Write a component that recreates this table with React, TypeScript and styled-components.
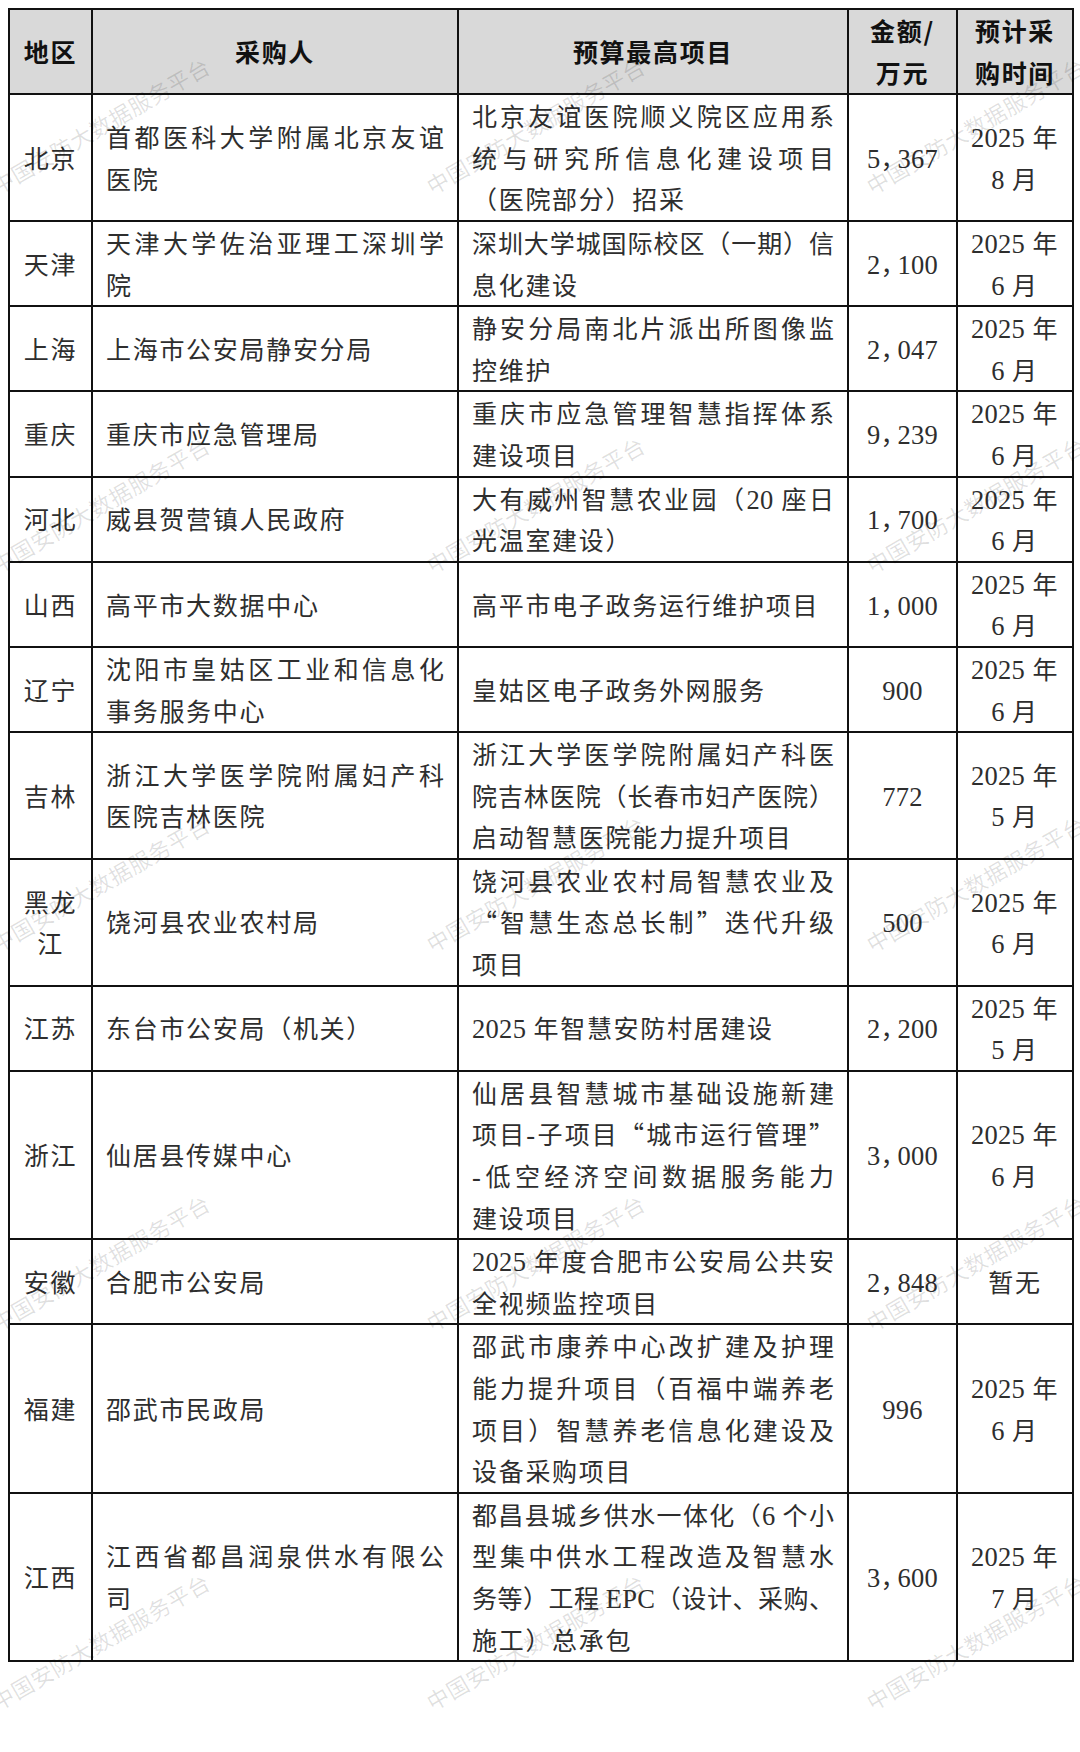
import React from "react";
import styled, { createGlobalStyle } from "styled-components";

const GlobalStyle = createGlobalStyle`
  html, body {
    margin: 0;
    padding: 0;
    background: #fff;
  }
  body {
    font-family: "Noto Sans CJK SC", sans-serif;
  }
`;

const Page = styled.div`
  position: relative;
  box-sizing: border-box;
  width: 1080px;
  height: 1752px;
  padding: 8px;
  overflow: hidden;
  background: #fff;
`;

const Table = styled.table`
  width: 1064px;
  table-layout: fixed;
  border-collapse: collapse;
  border: 2px solid #111;
  font-family: "Noto Sans CJK SC", "Noto Sans CJK JP", sans-serif;
  font-size: 25px;
  line-height: 41.6px;
  color: #2e2e2e;
`;

const Col = styled.col<{ $w: number }>`
  width: ${({ $w }) => $w}px;
`;

const HeadCell = styled.th`
  padding: 0 6px;
  border: 2px solid #111;
  background: #d9d9d9;
  color: #111;
  font-weight: 700;
  letter-spacing: 1px;
  text-align: center;
  vertical-align: middle;
`;

type Kind = "region" | "text" | "amount" | "date";

const Cell = styled.td<{ $kind: Kind }>`
  padding: 0 ${({ $kind }) => ($kind === "text" ? "13px" : "4px")};
  border: 2px solid #111;
  vertical-align: middle;
  text-align: ${({ $kind }) => ($kind === "text" ? "left" : "center")};
`;

// one printed line of a cell; full lines are stretched edge to edge like the source doc
const Line = styled.span<{ $fill: boolean }>`
  display: block;
  letter-spacing: ${({ $fill }) => ($fill ? "0" : "1.7px")};
  text-align: ${({ $fill }) => ($fill ? "justify" : "inherit")};
  text-align-last: ${({ $fill }) => ($fill ? "justify" : "auto")};
`;

const Latin = styled.span`
  font-family: "Liberation Serif", serif;
  font-size: 26.5px;
  line-height: 1;
  letter-spacing: 0.3px;
`;

// thousands separator: a CJK comma at half width, as in the printed table
const Sep = styled.span`
  display: inline-block;
  width: 17px;
  text-align: left;
  font-family: "Noto Sans CJK SC", sans-serif;
  font-size: 25px;
  line-height: 1;
  letter-spacing: 0;
  font-feature-settings: "halt";
`;

const WatermarkLayer = styled.div`
  position: absolute;
  inset: 0;
  pointer-events: none;
`;

const Mark = styled.span`
  position: absolute;
  transform: translate(-50%, -50%) rotate(-30deg);
  white-space: nowrap;
  font-family: "Noto Sans CJK SC", sans-serif;
  font-size: 22px;
  letter-spacing: 0.5px;
  color: rgba(0, 0, 0, 0.12);
`;

type Row = {
  region: string[];
  buyer: string[];
  project: string[];
  amount: string;
  date: string[];
};

const rows: Row[] = [
  {
    region: ["北京"],
    buyer: ["首都医科大学附属北京友谊", "医院"],
    project: ["北京友谊医院顺义院区应用系", "统与研究所信息化建设项目", "（医院部分）招采"],
    amount: "5，367",
    date: ["2025 年", "8 月"],
  },
  {
    region: ["天津"],
    buyer: ["天津大学佐治亚理工深圳学", "院"],
    project: ["深圳大学城国际校区（一期）信", "息化建设"],
    amount: "2，100",
    date: ["2025 年", "6 月"],
  },
  {
    region: ["上海"],
    buyer: ["上海市公安局静安分局"],
    project: ["静安分局南北片派出所图像监", "控维护"],
    amount: "2，047",
    date: ["2025 年", "6 月"],
  },
  {
    region: ["重庆"],
    buyer: ["重庆市应急管理局"],
    project: ["重庆市应急管理智慧指挥体系", "建设项目"],
    amount: "9，239",
    date: ["2025 年", "6 月"],
  },
  {
    region: ["河北"],
    buyer: ["威县贺营镇人民政府"],
    project: ["大有威州智慧农业园（20 座日", "光温室建设）"],
    amount: "1，700",
    date: ["2025 年", "6 月"],
  },
  {
    region: ["山西"],
    buyer: ["高平市大数据中心"],
    project: ["高平市电子政务运行维护项目"],
    amount: "1，000",
    date: ["2025 年", "6 月"],
  },
  {
    region: ["辽宁"],
    buyer: ["沈阳市皇姑区工业和信息化", "事务服务中心"],
    project: ["皇姑区电子政务外网服务"],
    amount: "900",
    date: ["2025 年", "6 月"],
  },
  {
    region: ["吉林"],
    buyer: ["浙江大学医学院附属妇产科", "医院吉林医院"],
    project: ["浙江大学医学院附属妇产科医", "院吉林医院（长春市妇产医院）", "启动智慧医院能力提升项目"],
    amount: "772",
    date: ["2025 年", "5 月"],
  },
  {
    region: ["黑龙", "江"],
    buyer: ["饶河县农业农村局"],
    project: ["饶河县农业农村局智慧农业及", "“智慧生态总长制”迭代升级", "项目"],
    amount: "500",
    date: ["2025 年", "6 月"],
  },
  {
    region: ["江苏"],
    buyer: ["东台市公安局（机关）"],
    project: ["2025 年智慧安防村居建设"],
    amount: "2，200",
    date: ["2025 年", "5 月"],
  },
  {
    region: ["浙江"],
    buyer: ["仙居县传媒中心"],
    project: [
      "仙居县智慧城市基础设施新建",
      "项目-子项目“城市运行管理”",
      "-低空经济空间数据服务能力",
      "建设项目",
    ],
    amount: "3，000",
    date: ["2025 年", "6 月"],
  },
  {
    region: ["安徽"],
    buyer: ["合肥市公安局"],
    project: ["2025 年度合肥市公安局公共安", "全视频监控项目"],
    amount: "2，848",
    date: ["暂无"],
  },
  {
    region: ["福建"],
    buyer: ["邵武市民政局"],
    project: [
      "邵武市康养中心改扩建及护理",
      "能力提升项目（百福中端养老",
      "项目）智慧养老信息化建设及",
      "设备采购项目",
    ],
    amount: "996",
    date: ["2025 年", "6 月"],
  },
  {
    region: ["江西"],
    buyer: ["江西省都昌润泉供水有限公", "司"],
    project: [
      "都昌县城乡供水一体化（6 个小",
      "型集中供水工程改造及智慧水",
      "务等）工程 EPC（设计、采购、",
      "施工）总承包",
    ],
    amount: "3，600",
    date: ["2025 年", "7 月"],
  },
];

const columns = [83, 366, 390, 109, 116];
const headers = [["地区"], ["采购人"], ["预算最高项目"], ["金额/", "万元"], ["预计采", "购时间"]];

const markXs = [100, 535, 975];
const markYs = [125, 504, 883, 1262, 1641];

const mixed = (text: string) =>
  text.split(/([0-9A-Za-z\-]+)/).map((part, i) =>
    i % 2 === 1 ? <Latin key={i}>{part}</Latin> : part
  );

const Lines = ({ lines, justify }: { lines: string[]; justify?: boolean }) => (
  <>
    {lines.map((line, i) => (
      <Line key={i} $fill={!!justify && i < lines.length - 1}>
        {mixed(line)}
      </Line>
    ))}
  </>
);

const Amount = ({ value }: { value: string }) => {
  const [head, tail] = value.split("，");
  return (
    <Line $fill={false}>
      <Latin>{head}</Latin>
      {tail && (
        <>
          <Sep>，</Sep>
          <Latin>{tail}</Latin>
        </>
      )}
    </Line>
  );
};

const App = () => {
  return (
    <Page>
      <GlobalStyle />
      <Table>
        <colgroup>
          {columns.map((w, i) => (
            <Col key={i} $w={w} />
          ))}
        </colgroup>
        <thead>
          <tr>
            {headers.map((h, i) => (
              <HeadCell key={i}>
                <Lines lines={h} />
              </HeadCell>
            ))}
          </tr>
        </thead>
        <tbody>
          {rows.map((row) => (
            <tr key={row.region.join("")}>
              <Cell $kind="region">
                <Lines lines={row.region} />
              </Cell>
              <Cell $kind="text">
                <Lines lines={row.buyer} justify />
              </Cell>
              <Cell $kind="text">
                <Lines lines={row.project} justify />
              </Cell>
              <Cell $kind="amount">
                <Amount value={row.amount} />
              </Cell>
              <Cell $kind="date">
                <Lines lines={row.date} />
              </Cell>
            </tr>
          ))}
        </tbody>
      </Table>
      <WatermarkLayer>
        {markYs.map((y) =>
          markXs.map((x) => (
            <Mark key={`${x}-${y}`} style={{ left: x, top: y }}>
              中国安防大数据服务平台
            </Mark>
          ))
        )}
      </WatermarkLayer>
    </Page>
  );
};

export default App;
